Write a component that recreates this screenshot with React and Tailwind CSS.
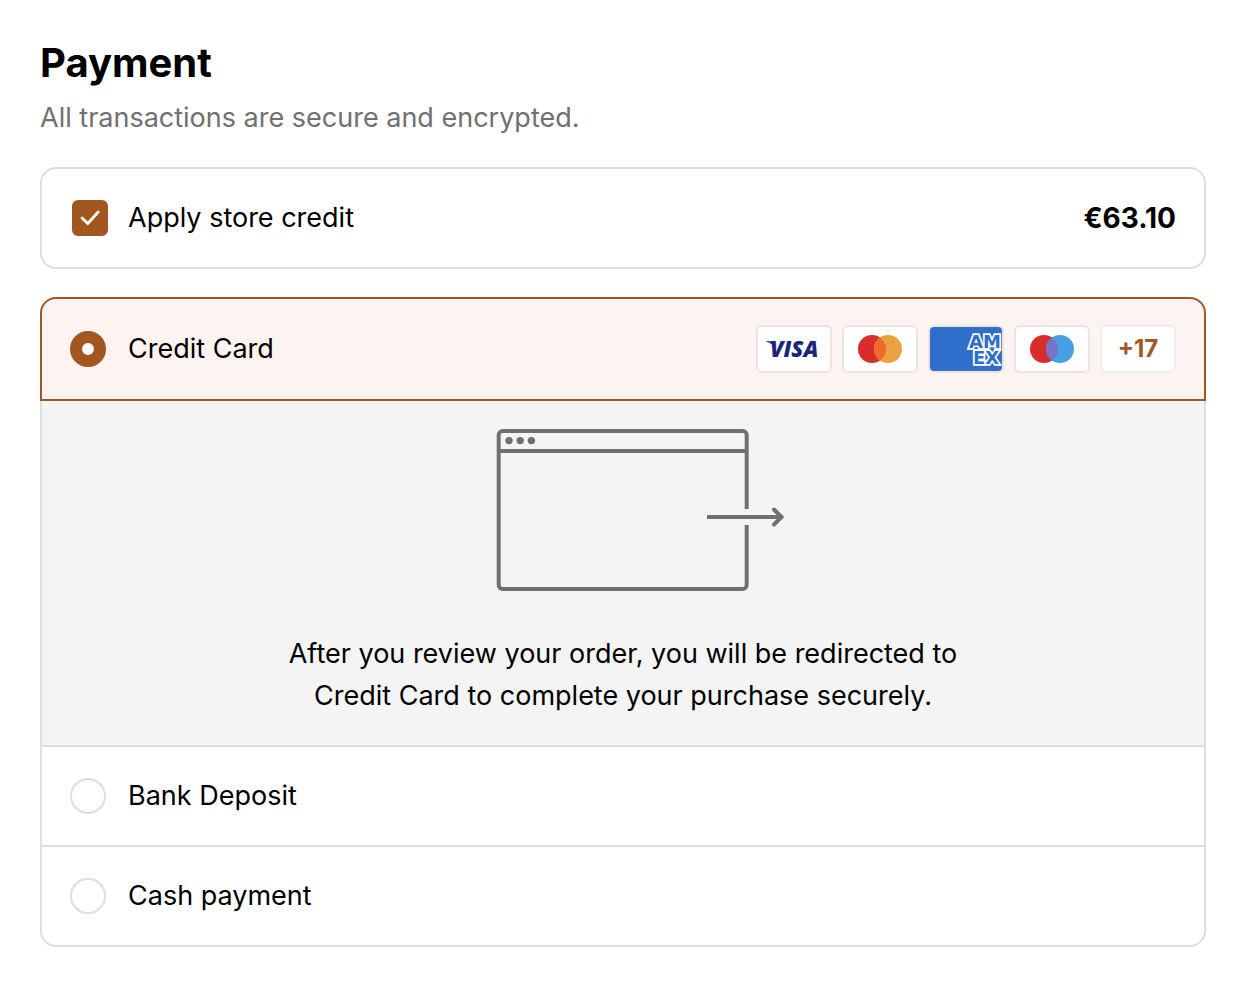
import { useState } from "react";

const cardBox =
  "w-[76px] h-12 shrink-0 rounded-md border-2 border-[#ece4e3] bg-white overflow-hidden flex items-center justify-center";

function VisaLogo() {
  return (
    <svg width="72" height="44" viewBox="0 0 72 44" role="img" aria-label="Visa">
      <text
        x="12"
        y="30"
        fill="#1a2580"
        fontFamily="'Open Sans', 'Noto Sans', sans-serif"
        fontSize="22"
        fontWeight="800"
        fontStyle="italic"
      >
        VISA
      </text>
      <path d="M8.200 14.200h6l2.600 2.400-1 3.400c-1.600-2.800-4-4.400-7.600-5.200z" fill="#1a2580" />
    </svg>
  );
}

function MastercardLogo() {
  return (
    <svg width="72" height="44" viewBox="0 0 72 44" role="img" aria-label="Mastercard">
      <circle cx="28" cy="22" r="14" fill="#d92d2b" />
      <circle cx="44" cy="22" r="14" fill="#eaa240" />
      <path d="M36 10.500a14 14 0 0 1 0 23a14 14 0 0 1 0-23z" fill="#f06a2c" />
    </svg>
  );
}

function AmexLogo() {
  return (
    <svg width="72" height="44" viewBox="0 0 72 44" role="img" aria-label="American Express">
      <rect width="72" height="44" fill="#2f6eca" />
      <text
        fill="#2f6eca"
        stroke="#fff"
        strokeWidth="3.400"
        strokeLinejoin="miter"
        paintOrder="stroke"
        fontFamily="'DejaVu Sans', sans-serif"
        fontSize="18"
        fontWeight="700"
      >
        <tspan x="39" y="21">AM</tspan>
        <tspan x="43" y="37">EX</tspan>
      </text>
    </svg>
  );
}

function MaestroLogo() {
  return (
    <svg width="72" height="44" viewBox="0 0 72 44" role="img" aria-label="Maestro">
      <circle cx="28" cy="22" r="14" fill="#d92d2b" />
      <circle cx="44" cy="22" r="14" fill="#48a0e2" />
      <path d="M36 10.500a14 14 0 0 1 0 23a14 14 0 0 1 0-23z" fill="#7673c8" />
    </svg>
  );
}

function CardLogos() {
  return (
    <div className="ml-auto flex items-center gap-[10px]">
      <span className={cardBox}><VisaLogo /></span>
      <span className={cardBox}><MastercardLogo /></span>
      <span className={cardBox}><AmexLogo /></span>
      <span className={cardBox}><MaestroLogo /></span>
      <button
        type="button"
        className="w-[76px] h-12 shrink-0 rounded-md border-2 border-[#eeeeee] bg-white text-2xl font-bold text-[#a3561f]"
      >
        +17
      </button>
    </div>
  );
}

function RedirectIcon() {
  return (
    <svg width="328" height="162" viewBox="0 0 328 162" fill="none" stroke="#707070" strokeWidth="4" aria-hidden="true">
      <path d="M287.700 80V6a4 4 0 0 0-4-4H43.700a4 4 0 0 0-4 4v150a4 4 0 0 0 4 4h240a4 4 0 0 0 4-4V96" />
      <path d="M39.700 22h248" />
      <g fill="#707070" stroke="none">
        <circle cx="50" cy="11.600" r="3.700" />
        <circle cx="61.200" cy="11.600" r="3.700" />
        <circle cx="72.400" cy="11.600" r="3.700" />
      </g>
      <path d="M248 88h74" />
      <path d="M315 80.500l7.500 7.500-7.500 7.500" strokeLinecap="round" />
    </svg>
  );
}

function PaymentOption({ id, label, selected, onSelect, className, children }) {
  return (
    <div className={`flex items-center px-7 ${className}`}>
      <label htmlFor={id} className="flex items-center gap-[22px] cursor-pointer">
        <input
          id={id}
          type="radio"
          name="payment"
          checked={selected}
          onChange={onSelect}
          className="appearance-none w-9 h-9 shrink-0 rounded-full border-2 border-[#dedede] bg-white checked:border-12 checked:border-[#a3561f]"
        />
        {label}
      </label>
      {children}
    </div>
  );
}

export default function App() {
  const [useCredit, setUseCredit] = useState(true);
  const [method, setMethod] = useState("card");

  return (
    <main className="pt-10 pb-10 pl-10 pr-12 bg-white text-black text-[27px] leading-[42px] font-['Inter',sans-serif]">
      <h1 className="text-[40px] leading-[45px] font-bold">Payment</h1>
      <p className="mt-3 text-[#707070]">All transactions are secure and encrypted.</p>

      {/* Store credit */}
      <div className="mt-7 h-[102px] pl-[30px] pr-7 flex items-center justify-between rounded-2xl border-2 border-[#dedede]">
        <label htmlFor="store-credit" className="flex items-center gap-5 cursor-pointer">
          <span className="relative w-9 h-9 shrink-0">
            <input
              id="store-credit"
              type="checkbox"
              checked={useCredit}
              onChange={(e) => setUseCredit(e.target.checked)}
              className="block appearance-none w-9 h-9 rounded-md border-2 border-[#dedede] checked:border-[#a3561f] checked:bg-[#a3561f]"
            />
            {useCredit && (
              <svg className="absolute inset-0 pointer-events-none" width="36" height="36" viewBox="0 0 36 36" fill="none">
                <path d="M10 18l5.800 5.500L26.200 12" stroke="#fff" strokeWidth="2.800" strokeLinecap="round" strokeLinejoin="miter" />
              </svg>
            )}
          </span>
          Apply store credit
        </label>
        <span className="text-[28px] font-bold">€63.10</span>
      </div>

      {/* Payment methods */}
      <div className="mt-7">
        <PaymentOption
          id="pay-card"
          label="Credit Card"
          selected={method === "card"}
          onSelect={() => setMethod("card")}
          className={
            method === "card"
              ? "h-[104px] rounded-t-2xl border-2 border-[#a3561f] bg-[#fdf3f0]"
              : "h-[104px] rounded-t-2xl border-2 border-b-0 border-[#dedede]"
          }
        >
          <CardLogos />
        </PaymentOption>

        {method === "card" && (
          <div className="flex flex-col items-center py-7 border-x-2 border-[#dedede] bg-[#f4f4f4]">
            <RedirectIcon />
            <p className="mt-[42px] max-w-[700px] text-center">
              After you review your order, you will be redirected to Credit Card to complete your purchase securely.
            </p>
          </div>
        )}

        <PaymentOption
          id="pay-bank"
          label="Bank Deposit"
          selected={method === "bank"}
          onSelect={() => setMethod("bank")}
          className="h-[100px] border-2 border-b-0 border-[#dedede]"
        />
        <PaymentOption
          id="pay-cash"
          label="Cash payment"
          selected={method === "cash"}
          onSelect={() => setMethod("cash")}
          className="h-[102px] rounded-b-2xl border-2 border-[#dedede]"
        />
      </div>
    </main>
  );
}
